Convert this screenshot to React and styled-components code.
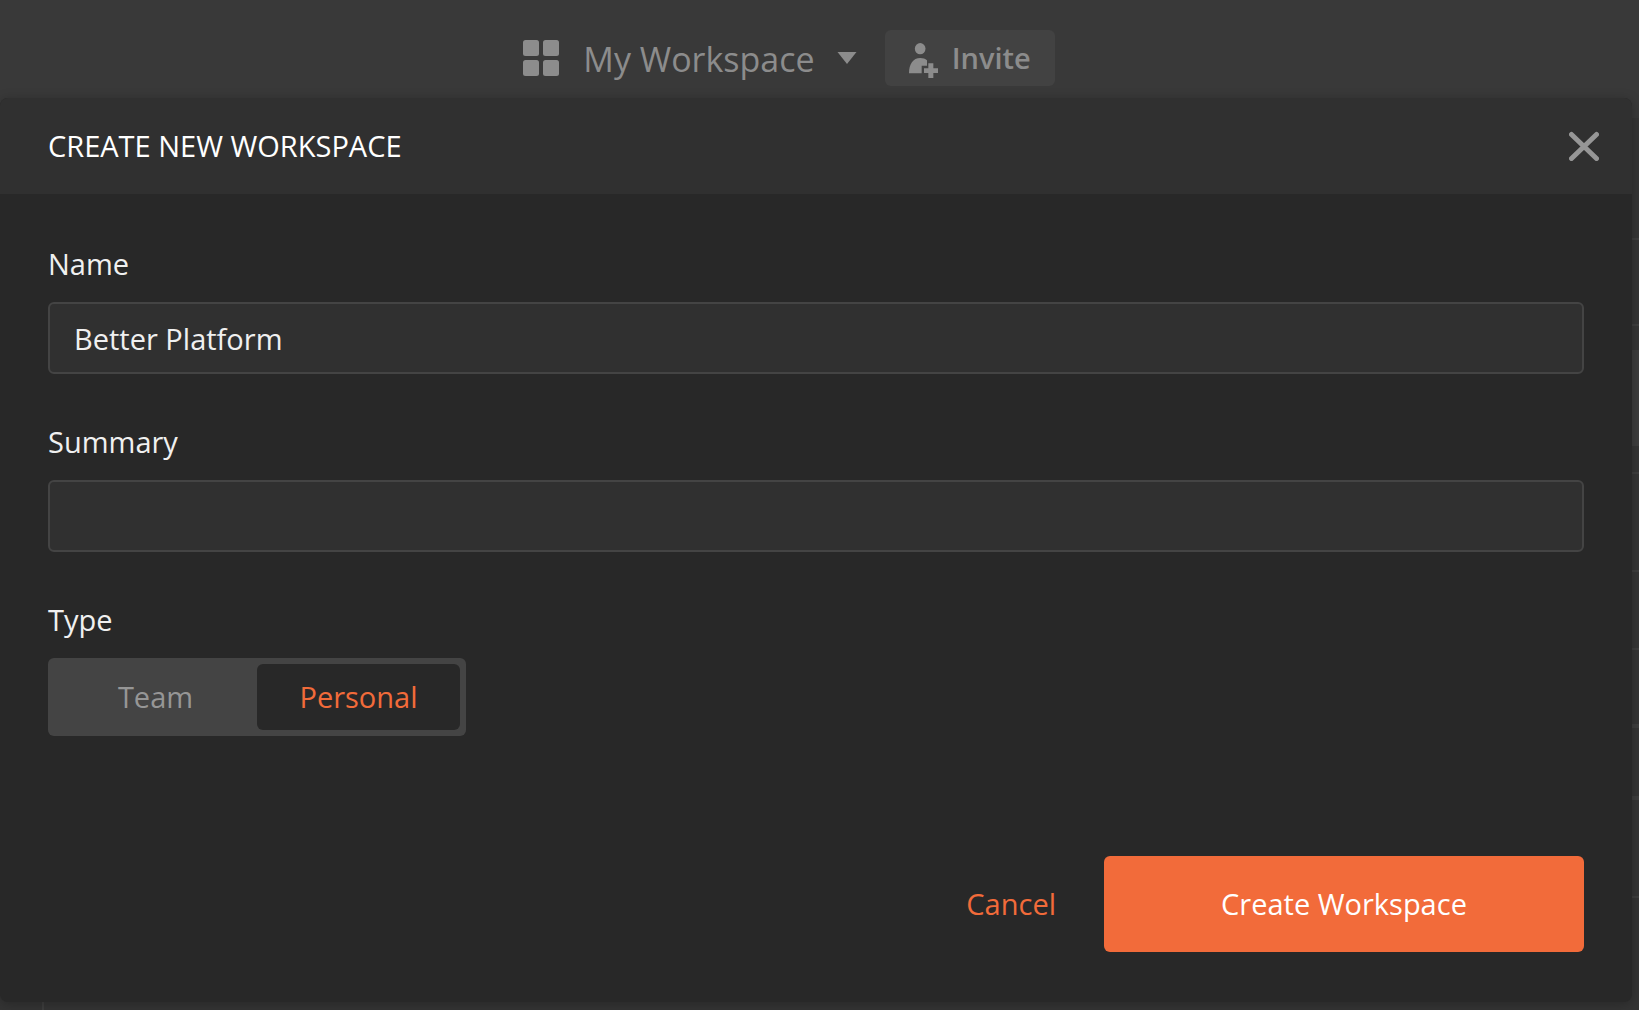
import { useState } from "react";
import styled, { createGlobalStyle } from "styled-components";

export default function App() {
    const [name, setName] = useState("Better Platform");
    const [summary, setSummary] = useState("");
    const [type, setType] = useState("Personal");

    return (
        <>
            <GlobalStyle/>
            <SCPage>
                <SCTopBar>
                    <SCWorkspaceButton type="button">
                        <GridIcon/>
                        <span>My Workspace</span>
                        <CaretIcon/>
                    </SCWorkspaceButton>
                    <SCInviteButton type="button">
                        <InviteIcon/>
                        <span>Invite</span>
                    </SCInviteButton>
                </SCTopBar>
                <SCWorkspace>
                    <SCSidebar/>
                    <SCPanels>
                        {panels.map((panel, i) => (
                            <SCPanel key={i} {...panel}/>
                        ))}
                    </SCPanels>
                </SCWorkspace>

                <SCModal role="dialog" aria-labelledby="modal-title">
                    <SCModalHeader>
                        <h1 id="modal-title">CREATE NEW WORKSPACE</h1>
                        <SCCloseButton type="button" aria-label="Close">
                            <CloseIcon/>
                        </SCCloseButton>
                    </SCModalHeader>
                    <SCForm onSubmit={(e) => e.preventDefault()}>
                        <SCField>
                            <label htmlFor="name">Name</label>
                            <SCInput id="name" type="text" value={name} onChange={(e) => setName(e.target.value)}/>
                        </SCField>
                        <SCField>
                            <label htmlFor="summary">Summary</label>
                            <SCInput id="summary" type="text" value={summary} onChange={(e) => setSummary(e.target.value)}/>
                        </SCField>
                        <SCTypeField>
                            <legend>Type</legend>
                            <SCSegmented>
                                {["Team", "Personal"].map((option) => (
                                    <SCOption key={option} $active={type === option}>
                                        <input
                                            type="radio"
                                            name="type"
                                            value={option}
                                            checked={type === option}
                                            onChange={() => setType(option)}
                                        />
                                        {option}
                                    </SCOption>
                                ))}
                            </SCSegmented>
                        </SCTypeField>
                        <SCActions>
                            <SCCancelButton type="button">Cancel</SCCancelButton>
                            <SCCreateButton type="submit">Create Workspace</SCCreateButton>
                        </SCActions>
                    </SCForm>
                </SCModal>
            </SCPage>
        </>
    )
}

const panels = [
    { $height: 122, $line: 2 },
    { $height: 86, $line: 2 },
    { $height: 24, $line: 0 },
    { $height: 96, $line: 0, $raised: true },
    { $height: 28, $line: 2 },
    { $height: 98, $line: 2 },
    { $height: 78, $line: 2 },
    { $height: 78, $line: 4 },
    { $height: 72, $line: 4 },
    { $height: 98, $line: 2 },
];

function GridIcon() {
    return (
        <svg width="36" height="36" viewBox="0 0 36 36" fill="currentColor" aria-hidden="true">
            <rect width="16" height="16" rx="2.5"/>
            <rect x="20" width="16" height="16" rx="2.5"/>
            <rect y="20" width="16" height="16" rx="2.5"/>
            <rect x="20" y="20" width="16" height="16" rx="2.5"/>
        </svg>
    )
}

function CaretIcon() {
    return (
        <svg width="20" height="12" viewBox="0 0 20 12" fill="currentColor" aria-hidden="true">
            <path d="M0.5 0h19L10 12z"/>
        </svg>
    )
}

function InviteIcon() {
    return (
        <svg width="29" height="35" viewBox="0 0 87 105" fill="currentColor" aria-hidden="true">
            <ellipse cx="33.5" cy="17" rx="16" ry="17"/>
            <path d="M0 91C0 63 12 45 34 45c8 0 15 2 20 7v16H38v23z"/>
            <path d="M58 61h15v15h14v14H73v15H58V90H45V76h13z"/>
        </svg>
    )
}

function CloseIcon() {
    return (
        <svg width="30" height="30" viewBox="0 0 30 30" fill="none" stroke="currentColor" strokeWidth="5" strokeLinecap="round" aria-hidden="true">
            <path d="M2.5 3.5l25 24M27.5 3.5l-25 24"/>
        </svg>
    )
}

const GlobalStyle = createGlobalStyle `
    * {
        box-sizing: border-box;
    }

    body {
        margin: 0;
        background: #343434;
    }

    body, button, input {
        font-family: 'Open Sans', 'Noto Sans', sans-serif;
        font-size: 29px;
        line-height: 40px;
    }

    button {
        padding: 0;
        border: none;
        background: none;
        cursor: pointer;
    }

    svg {
        display: block;
        flex-shrink: 0;
    }
`

const SCPage = styled.div `
    display: flex;
    flex-direction: column;
    position: relative;
    min-height: 100vh;
    overflow: hidden;
`

const SCTopBar = styled.header `
    display: flex;
    justify-content: center;
    align-items: center;
    gap: 28px;
    height: 118px;
    padding: 0 61px 2px 0;
    background: #393939;
    color: #8c8c8c;
`

const SCWorkspaceButton = styled.button `
    display: flex;
    align-items: center;
    gap: 22px;
    color: inherit;
    font-size: 34px;

    span {
        padding: 2px 0 0 2px;
    }
`

const SCInviteButton = styled.button `
    display: flex;
    align-items: center;
    gap: 14px;
    height: 56px;
    padding: 0 24px;
    border-radius: 6px;
    background: #424242;
    color: inherit;
    font-weight: 600;

    svg {
        margin-top: 4px;
    }
`

const SCWorkspace = styled.div `
    display: flex;
    flex: 1;
`

const SCSidebar = styled.div `
    width: 44px;
    border-right: 2px solid #3e3e3e;
`

const SCPanels = styled.div `
    flex: 1;
`

const SCPanel = styled.div `
    height: ${(props) => props.$height}px;
    border-bottom: ${(props) => props.$line}px solid #3e3e3e;
    background: ${(props) => props.$raised ? "#3e3e3e" : "#353535"};
`

const SCModal = styled.section `
    position: absolute;
    top: 98px;
    left: 0;
    right: 7px;
    border-radius: 8px;
    background: #282828;
    box-shadow: 0 2px 12px rgba(0, 0, 0, 0.25);
    color: #f0f0f0;
`

const SCModalHeader = styled.div `
    display: flex;
    justify-content: space-between;
    align-items: center;
    height: 96px;
    padding: 0 33px 0 48px;
    border-radius: 8px 8px 0 0;
    background: #303030;

    h1 {
        margin: 0;
        color: #ffffff;
        font-size: 29px;
        font-weight: 400;
    }
`

const SCCloseButton = styled.button `
    color: #969696;
`

const SCForm = styled.form `
    display: flex;
    flex-direction: column;
    gap: 48px;
    padding: 50px 48px;
`

const SCField = styled.div `
    display: flex;
    flex-direction: column;
    gap: 18px;
`

const SCInput = styled.input `
    width: 100%;
    height: 72px;
    padding: 0 24px;
    border: 2px solid #444444;
    border-radius: 6px;
    outline: none;
    background: #303030;
    color: #f0f0f0;
`

const SCTypeField = styled.fieldset `
    min-width: 0;
    margin: 0;
    padding: 0;
    border: none;

    legend {
        padding: 0;
        margin-bottom: 18px;
    }
`

const SCSegmented = styled.div `
    display: inline-flex;
    padding: 6px;
    border-radius: 6px;
    background: #444444;
    vertical-align: top;
`

const SCOption = styled.label `
    display: flex;
    justify-content: center;
    align-items: center;
    width: 203px;
    height: 66px;
    border-radius: 6px;
    background: ${(props) => props.$active ? "#282828" : "transparent"};
    color: ${(props) => props.$active ? "#f26b3a" : "#969696"};
    cursor: pointer;

    input {
        appearance: none;
        width: 0;
        height: 0;
        margin: 0;
    }
`

const SCActions = styled.div `
    display: flex;
    justify-content: flex-end;
    align-items: center;
    gap: 48px;
    margin-top: 72px;
`

const SCCancelButton = styled.button `
    color: #f26b3a;
`

const SCCreateButton = styled.button `
    width: 480px;
    height: 96px;
    border-radius: 6px;
    background: #f26b3a;
    color: #ffffff;
`
